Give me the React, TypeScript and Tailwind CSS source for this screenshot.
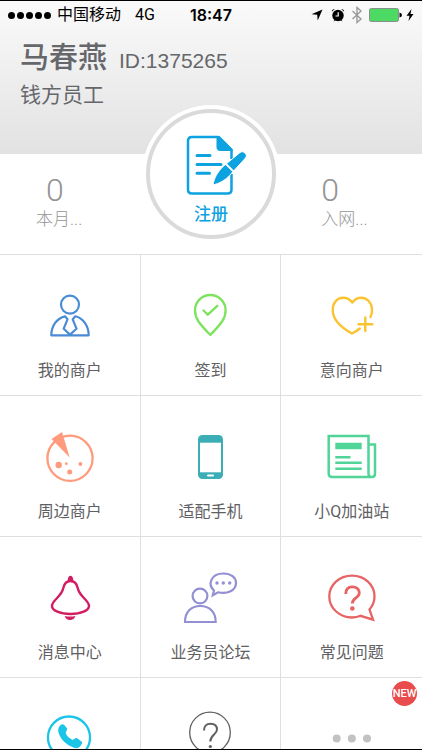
import type { ReactNode } from "react";

interface MenuItem {
  name: string;
  icon: ReactNode;
  iconOnly?: boolean;
  badge?: string;
}

interface StatProps {
  value: number;
  label: string;
  className?: string;
  valueClassName?: string;
}

const iconClass = "size-[60px] shrink-0";

const menuItems: MenuItem[] = [
  {
    name: "我的商户",
    icon: (
      <svg viewBox="0 0 60 60" className={iconClass} fill="none" stroke="#4a8bd6" strokeWidth="2.2" strokeLinejoin="round">
        <circle cx="30" cy="18.6" r="9" />
        <path d="M25 30.3C17 32 11.3 40 11.3 49.3H48.7C48.7 40 43 32 35.4 30.3L32.7 33.3L36.5 42.7L30 48.6L23.7 42.7L27.5 33.3Z" />
      </svg>
    ),
  },
  {
    name: "签到",
    icon: (
      <svg viewBox="0 0 60 60" className={iconClass} fill="none" stroke="#7be35c" strokeWidth="2.3" strokeLinecap="round" strokeLinejoin="round">
        <path d="M30.3 49C26 44.5 22 40.5 18.5 35.5C16.2 32 15 28.5 15 24.5C15 15.5 22 9 30.3 9S45.6 15.5 45.6 24.5C45.6 28.5 44.4 32 42.1 35.5C38.6 40.5 34.5 44.5 30.3 49Z" />
        <path d="M23.5 24.5L27.8 28.7L37.3 19.8" />
      </svg>
    ),
  },
  {
    name: "意向商户",
    icon: (
      <svg viewBox="0 0 60 60" className={iconClass} fill="none" stroke="#fac431" strokeWidth="2.4" strokeLinecap="round" strokeLinejoin="round">
        <path d="M48.5 31C49.8 28.5 50.3 26 50 23C49.5 16 44.5 11.7 39.500 11.7C35.5 11.7 32.5 13.5 30.3 16.5C28 13.5 25 11.7 21 11.7C15 11.7 10.7 17 10.7 24C10.7 35 20 42 30 47.5C33 46 35.5 44.5 37.8 42.5" />
        <path d="M43.3 31.5V45M36.500 38.3H50.3" />
      </svg>
    ),
  },
  {
    name: "周边商户",
    icon: (
      <svg viewBox="0 0 60 60" className={iconClass} fill="#ff9b7c">
        <circle cx="30" cy="31.3" r="22.6" fill="none" stroke="#ff9b7c" strokeWidth="2.3" />
        <path d="M11.5 12L22 5L29.7 30.5Z" />
        <circle cx="18.7" cy="38" r="3.2" />
        <circle cx="26.3" cy="36.7" r="1.4" />
        <circle cx="40.4" cy="37" r="1.9" />
        <circle cx="29.7" cy="45" r="2.5" />
      </svg>
    ),
  },
  {
    name: "适配手机",
    icon: (
      <svg viewBox="0 0 60 60" className={iconClass}>
        <rect x="18" y="8" width="25" height="44" rx="4.5" fill="#3aadb5" />
        <rect x="20" y="15.7" width="21" height="29.6" fill="#fff" />
        <rect x="27" y="47.5" width="7" height="2" rx="1" fill="#fff" />
      </svg>
    ),
  },
  {
    name: "小Q加油站",
    icon: (
      <svg viewBox="0 0 60 60" className={iconClass} fill="none" stroke="#50d497" strokeWidth="2.5">
        <path d="M46.5 17V9H6.7V46.5Q6.7 50 10.2 50H50Q53 50 53 46.5V17.5H46.5V46.5Q46.5 50 49.5 50" />
        <path d="M13.3 30.3H28.5M13.3 35.7H39.7M13.3 41.7H39.7" />
        <path d="M13.3 19H39.7" strokeWidth="6.5" />
      </svg>
    ),
  },
  {
    name: "消息中心",
    icon: (
      <svg viewBox="0 0 60 60" className={iconClass} fill="none" stroke="#d31d62" strokeWidth="2.4">
        <path d="M30.5 13C26 13 24.3 15.5 23.3 20C21.5 29 12 32 12 38C12 42.5 20 46 30.5 46S49 42.5 49 38C49 32 39.5 29 37.7 20C36.7 15.5 35 13 30.5 13Z" />
        <path d="M27.7 13C27.5 6 33.5 6 33.3 13Z" fill="#d31d62" stroke="none" />
        <path d="M24.7 48Q30 49 35.5 48Q34 52 30 52T24.7 48Z" fill="#d31d62" stroke="none" />
      </svg>
    ),
  },
  {
    name: "业务员论坛",
    icon: (
      <svg viewBox="0 0 60 60" className={iconClass} fill="none" stroke="#938fd3" strokeWidth="2.2">
        <circle cx="20" cy="28" r="7.4" />
        <path d="M5 54C5 44 11 38 20.3 38S35.7 44 35.7 54Z" />
        <path d="M32.8 27.2L34 22.5C27.5 17 30.5 5.5 43.3 5.5C51 5.5 56 9.5 56 15C56 22.5 47.5 26.5 38 24.3Z" />
        <g fill="#938fd3" stroke="none">
          <circle cx="37" cy="15" r="1.7" />
          <circle cx="43.3" cy="15" r="1.7" />
          <circle cx="49.7" cy="15" r="1.7" />
        </g>
      </svg>
    ),
  },
  {
    name: "常见问题",
    icon: (
      <svg viewBox="0 0 60 60" className={iconClass} fill="none" stroke="#e86463" strokeWidth="2.3">
        <path d="M51 51.7L47.5 41.5C50.5 38 52.5 33.5 52.5 28.5C52.5 16.5 42.5 7.7 30 7.7S7.3 16.5 7.3 28.5S18 49.5 30 49.5C33 49.5 36 49 38.5 47.8Z" />
        <path d="M23.7 26C23.7 21 26.3 18.8 30.3 18.8C34.7 18.8 37.3 21.5 37.3 25C37.3 30 30.3 30 30.3 35.5" strokeWidth="2.8" />
        <circle cx="30.3" cy="40.5" r="2.3" fill="#e86463" stroke="none" />
      </svg>
    ),
  },
  {
    name: "电话",
    iconOnly: true,
    icon: (
      <svg viewBox="0 0 60 60" className={iconClass}>
        <circle cx="29" cy="28.5" r="21" fill="none" stroke="#1bc5e8" strokeWidth="2.3" />
        <path
          d="M22.2 15.2C23 15 23.5 15.2 24 15.8L27 19.2C28 20.5 25.5 22.5 25.8 24C26.5 27 29.5 29.5 32.3 30.7C34 31.4 35.5 28.3 37.2 29.3L41.5 32.5C42.3 33.2 42.2 34 41.7 35C40 38.5 37.5 40 34 38.7C26.5 36 20.5 30.5 18.5 23.5C17.5 20 19 16.5 22.2 15.2Z"
          fill="#1bc5e8"
        />
      </svg>
    ),
  },
  {
    name: "帮助",
    iconOnly: true,
    icon: (
      <svg viewBox="0 0 60 60" className={iconClass} fill="none" stroke="#5f6063">
        <circle cx="30" cy="23.5" r="20.3" strokeWidth="1.3" />
        <path d="M24 21.5C24 17 26.5 14.7 30.5 14.7S37 17 37 20.5C37 25.5 30.3 25.5 30.3 32.5" strokeWidth="2" />
        <circle cx="30.3" cy="37.5" r="1.6" fill="#5f6063" stroke="none" />
      </svg>
    ),
  },
  {
    name: "更多",
    iconOnly: true,
    badge: "NEW",
    icon: (
      <svg viewBox="0 0 60 60" className={iconClass} fill="#c2c2c2">
        <circle cx="14.7" cy="29.5" r="4" />
        <circle cx="29.8" cy="29.5" r="4" />
        <circle cx="45" cy="29.5" r="4" />
      </svg>
    ),
  },
];

function StatusBar() {
  return (
    <div className="grid h-7 grid-cols-[1fr_auto_1fr] items-center px-2 text-base leading-5 text-black">
      <div className="flex items-center">
        <div className="flex gap-0.5">
          {[0, 1, 2, 3, 4].map((dot) => (
            <span key={dot} className="size-[7px] rounded-full bg-black" />
          ))}
        </div>
        <span className="ml-1.5 whitespace-nowrap">中国移动</span>
        <span className="ml-3.5">4G</span>
      </div>
      <span className="font-['Inter',sans-serif] font-semibold">18:47</span>
      <div className="flex items-center justify-end">
        <svg viewBox="0 0 12 12" className="size-3">
          <path d="M11.5 0.5L6.7 11.5L6.2 5.8L0.5 5.3Z" />
        </svg>
        <svg viewBox="0 0 14 14" className="ml-2 size-3.5">
          <circle cx="7" cy="7.5" r="5.7" />
          <path d="M0.8 3.7Q1 1 3.8 0.9ZM13.2 3.7Q13 1 10.2 0.9ZM2.5 13.5L4 11L5 12ZM11.5 13.5L10 11L9 12Z" />
          <path d="M7.2 4.2V8H4.5" fill="none" stroke="#fff" strokeWidth="1.2" />
        </svg>
        <svg viewBox="0 0 12 18" className="ml-1.5 h-[18px] w-3" fill="none" stroke="#9a9a9c" strokeWidth="1.4">
          <path d="M1.5 5L10 13L6 16.5V1.5L10 5L1.5 13" />
        </svg>
        <svg viewBox="0 0 33 14" className="ml-1.5 h-3.5 w-[33px]">
          <rect x="0.5" y="0.5" width="29" height="13" rx="1.8" fill="#4cd964" stroke="#8a8f8b" />
          <path d="M30.5 4.5Q33 5 33 7T30.5 9.5Z" />
        </svg>
        <svg viewBox="0 0 8 12" className="ml-1 h-3 w-2">
          <path d="M5.5 0L0.5 6.8H3.5L2.5 12L7.5 5H4.5Z" />
        </svg>
      </div>
    </div>
  );
}

function Stat({ value, label, className = "", valueClassName = "" }: StatProps) {
  return (
    <div className={`pt-[17px] text-[#949494] ${className}`}>
      <div className={`text-[32px] leading-[38px] font-light ${valueClassName}`}>{value}</div>
      <div className="text-[17px] leading-5 font-light">{label}</div>
    </div>
  );
}

function RegisterButton() {
  return (
    <div className="absolute -top-[49px] left-1/2 -translate-x-1/2 rounded-full bg-white p-1">
      <button
        type="button"
        className="flex size-[130px] flex-col items-center rounded-full border-4 border-[#dadada] bg-white pt-[19px] text-[#0da2e0]"
      >
        <svg viewBox="-4 0 72 64" className="h-16 w-[72px] shrink-0">
          <path
            d="M52.5 42V57.5Q52.5 61.5 48.5 61.5H13Q9 61.5 9 57.5V9Q9 5 13 5H39L52.5 18V27"
            fill="none"
            stroke="#0da2e0"
            strokeWidth="2.5"
          />
          <path d="M37.5 4H40.5L53.5 17V19H41.5Q37.5 19 37.5 15Z" fill="#0da2e0" />
          <path d="M18 23.5H31M18 32.5H42M18 41.3H30.5" stroke="#0da2e0" strokeWidth="3" strokeLinecap="round" />
          <path
            d="M34 53C35 46 38.5 40.5 43.5 35L61 20.5C64 18 69.5 22.5 66.5 26L50.5 43.5C46 48.5 40.5 51.5 34 53Z"
            fill="#0da2e0"
            stroke="#fff"
            strokeWidth="1"
          />
          <path d="M46.5 31.5L54.5 39.5" stroke="#fff" strokeWidth="1.8" />
        </svg>
        <span className="mt-1.5 text-[17px] leading-6 font-medium">注册</span>
      </button>
    </div>
  );
}

function MenuCell({ name, icon, iconOnly = false, badge }: MenuItem) {
  return (
    <button
      type="button"
      aria-label={iconOnly ? name : undefined}
      className="relative flex h-[141px] flex-col items-center border-t border-r border-[#dfdfe3] pt-[31px] nth-[3n]:border-r-0"
    >
      {icon}
      {!iconOnly && (
        <span className="mt-[15px] text-base leading-5 whitespace-nowrap text-[#5f6063]">{name}</span>
      )}
      {badge && (
        <span className="absolute top-[3px] right-[5px] flex size-[25px] items-center justify-center rounded-full bg-[#e84c4c] text-[11px] leading-3 font-medium text-white">
          {badge}
        </span>
      )}
    </button>
  );
}

export default function App() {
  return (
    <div className="flex h-screen flex-col overflow-hidden border-y border-black bg-white font-['Roboto','Noto_Sans_CJK_SC',sans-serif]">
      <header className="h-[153px] shrink-0 bg-linear-to-b from-[#fafafa] to-[#e2e2e2] text-[#66676b]">
        <StatusBar />
        <div className="px-5 pt-[9px]">
          <div className="flex items-baseline gap-3">
            <h1 className="text-[29px] leading-10 font-medium">马春燕</h1>
            <span className="font-['Liberation_Sans',sans-serif] text-[21px] leading-10">ID:1375265</span>
          </div>
          <p className="text-[21px] leading-7">钱方员工</p>
        </div>
      </header>

      <section className="relative grid h-[100px] shrink-0 grid-cols-3">
        <Stat value={0} label="本月..." className="pl-9" valueClassName="pl-2.5" />
        <Stat value={0} label="入网..." className="col-start-3 pl-10" />
        <RegisterButton />
      </section>

      <main className="grid shrink-0 grid-cols-3">
        {menuItems.map((item) => (
          <MenuCell key={item.name} {...item} />
        ))}
      </main>
    </div>
  );
}
